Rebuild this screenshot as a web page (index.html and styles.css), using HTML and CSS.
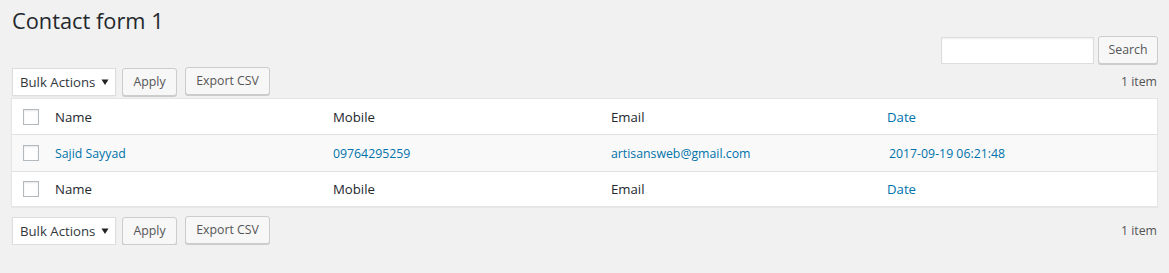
FILE: index.html
```html
<!DOCTYPE html>
<html>
<head>
<meta charset="utf-8">
<link rel="stylesheet" href="styles.css">
</head>
<body>
<div class="wrap">
  <h1 class="title">Contact form 1</h1>
  <div class="search-box">
    <input type="text" class="search-input">
    <button class="btn search-btn">Search</button>
  </div>
  <div class="tablenav top">
    <div class="actions">
      <div class="select">Bulk Actions <svg class="caret" width="8" height="8" viewBox="0 0 8 8"><path d="M0.5 1.5 H7.5 L4 7 Z" fill="#222"/></svg></div>
      <button class="btn">Apply</button>
      <button class="btn export">Export CSV</button>
    </div>
    <div class="count">1 item</div>
  </div>
  <div class="table">
    <div class="row head">
      <div class="cell check"><span class="cb"></span></div>
      <div class="cell">Name</div>
      <div class="cell">Mobile</div>
      <div class="cell">Email</div>
      <div class="cell link date-h">Date</div>
    </div>
    <div class="row body">
      <div class="cell check"><span class="cb"></span></div>
      <div class="cell link">Sajid Sayyad</div>
      <div class="cell link">09764295259</div>
      <div class="cell link">artisansweb@gmail.com</div>
      <div class="cell link date">2017-09-19 06:21:48</div>
    </div>
    <div class="row foot">
      <div class="cell check"><span class="cb"></span></div>
      <div class="cell">Name</div>
      <div class="cell">Mobile</div>
      <div class="cell">Email</div>
      <div class="cell link date-h">Date</div>
    </div>
  </div>
  <div class="tablenav bottom">
    <div class="actions">
      <div class="select">Bulk Actions <svg class="caret" width="8" height="8" viewBox="0 0 8 8"><path d="M0.5 1.5 H7.5 L4 7 Z" fill="#222"/></svg></div>
      <button class="btn">Apply</button>
      <button class="btn export">Export CSV</button>
    </div>
    <div class="count">1 item</div>
  </div>
</div>
</body>
</html>
```
FILE: styles.css
```css
* { box-sizing: border-box; }
html, body { margin: 0; padding: 0; }
body {
  background: #f1f1f1;
  color: #23282d;
  font-family: "Open Sans", "Noto Sans", sans-serif;
  font-size: 12.3px;
}
.wrap {
  padding: 0 11px 0 11px;
}
.title {
  margin: 0;
  padding: 6px 0 0 1px;
  font-size: 21.8px;
  font-weight: 400;
  line-height: 29px;
  height: 36px;
}
.search-box {
  display: flex;
  justify-content: flex-end;
  gap: 4px;
}
.search-input {
  width: 153px;
  height: 27px;
  border: 1px solid #ddd;
  background: #fff;
  margin: 1px 0 0 0;
  box-shadow: inset 0 1px 2px rgba(0,0,0,0.07);
}
.btn {
  font-family: inherit;
  font-size: 12.3px;
  color: #555;
  background: #f7f7f7;
  border: 1px solid #ccc;
  border-radius: 3px;
  box-shadow: 0 1px 0 #ccc;
  height: 28px;
  padding: 0 10px;
  line-height: 26px;
}
.search-btn { width: 60px; padding: 0; }
.tablenav {
  display: flex;
  justify-content: space-between;
  align-items: center;
}
.tablenav.top { margin-top: 2px; height: 32px; padding-bottom: 1px; }
.tablenav.bottom { margin-top: 9px; height: 29px; }
.actions {
  display: flex;
  align-items: center;
}
.select {
  width: 104px;
  height: 28px;
  margin-left: 1px;
  background: #fff;
  border: 1px solid #ddd;
  box-shadow: 0 1px 2px rgba(0,0,0,0.04);
  display: flex;
  align-items: center;
  padding-left: 7px;
  color: #32373c;
  font-size: 13.2px;
  position: relative;
}
.caret {
  position: absolute;
  right: 6px;
  top: 9px;
}
.actions .btn { margin-left: 6px; }
.actions .btn.export { margin-left: 8px; margin-top: -2px; width: 85px; padding: 0; }
.actions .btn:nth-child(2) { width: 55px; padding: 0; }
.count {
  color: #555;
  padding-right: 1px;
}
.table {
  background: #fff;
  border: 1px solid #e5e5e5;
  box-shadow: 0 1px 1px rgba(0,0,0,0.04);
}
.row {
  display: grid;
  grid-template-columns: 33px 1fr 1fr 1fr 1fr;
  align-items: center;
}
.row.head { border-bottom: 1px solid #e1e1e1; height: 36px; font-size: 13.2px; }
.row.body { background: #f9f9f9; height: 36px; }
.row.foot { border-top: 1px solid #e1e1e1; height: 35px; font-size: 13.2px; }
.cell { padding-left: 10px; white-space: nowrap; }
.cell.check { padding-left: 11px; display: flex; }
.cb {
  display: inline-block;
  width: 16px;
  height: 16px;
  border: 1px solid #b4b9be;
  background: #fff;
  box-shadow: inset 0 1px 2px rgba(0,0,0,0.1);
}
.link { color: #0073aa; }
.date { padding-left: 10px; }
.date-h { padding-left: 8px; }
```
